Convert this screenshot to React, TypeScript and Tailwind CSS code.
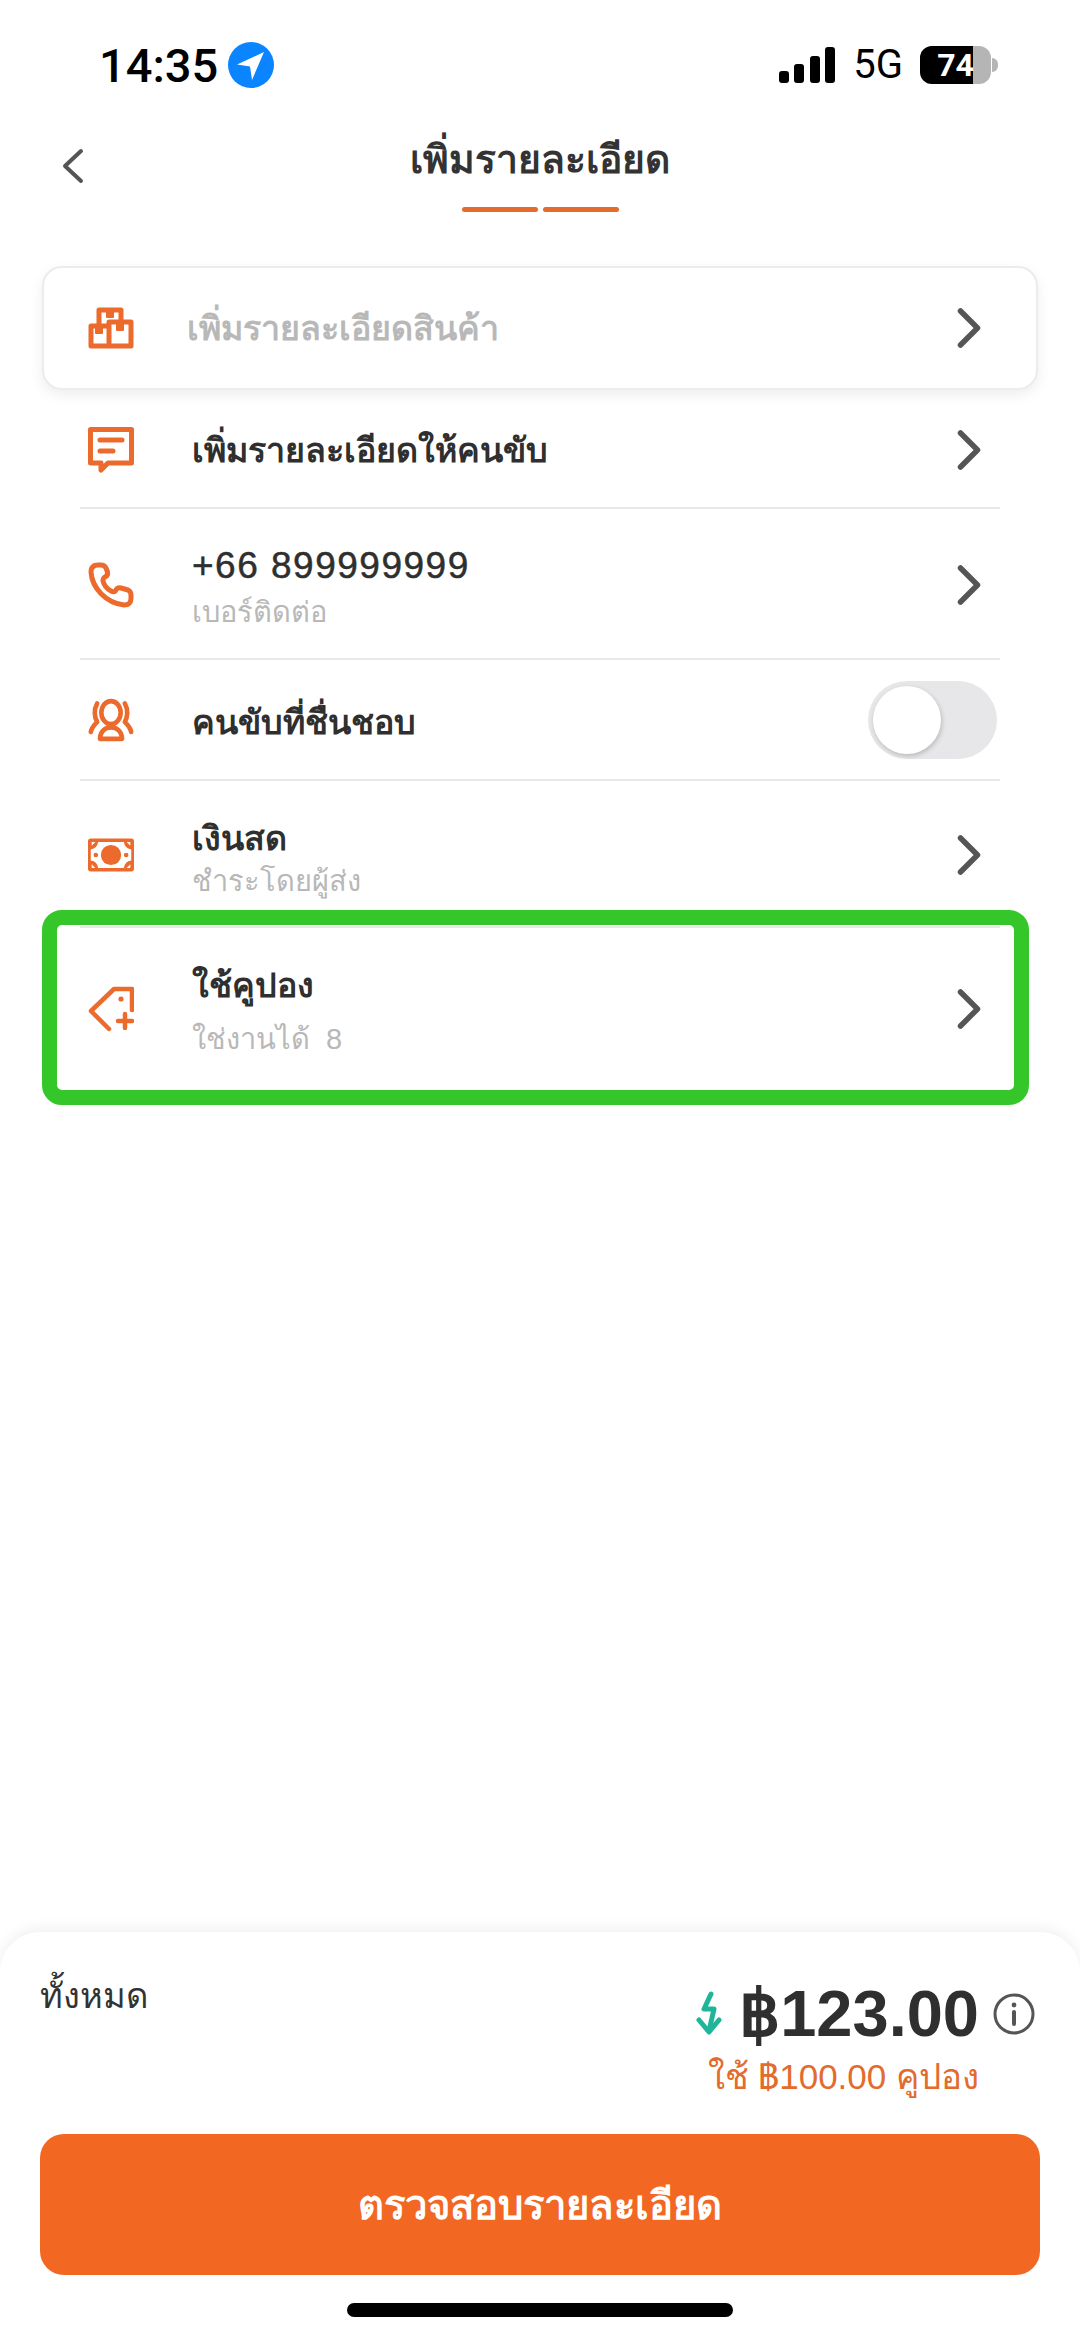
const O = "#ec6a2c";

function Chevron() {
  return (
    <svg width="24" height="40" viewBox="0 0 24 40" fill="none" className="shrink-0">
      <path d="M3.5 3 L20.5 20 L3.5 37" stroke="#555" strokeWidth="5.5" strokeLinecap="round" strokeLinejoin="round" />
    </svg>
  );
}

function BoxIcon() {
  return (
    <svg width="46" height="42" viewBox="0 0 46 42" fill="none" stroke={O} strokeWidth="5" strokeLinejoin="round">
      <path d="M3 19 H11 V3 H33 V15 H43 V39 H3 Z" />
      <path d="M11 19 H21 V39 M21 19 V15 H33" />
      <path d="M19 3 V10 H25 V3 Z M8 19 V26 H14 V19 Z M29 15 V23 H35 V15 Z" fill={O} stroke={O} strokeWidth="2" />
    </svg>
  );
}
function MsgIcon() {
  return (
    <svg width="46" height="46" viewBox="0 0 46 46" fill="none" stroke={O} strokeWidth="5" strokeLinejoin="round" strokeLinecap="round">
      <path d="M2.5 2.5 H43.5 V36 H20 L13 43 V36 H2.5 Z" />
      <path d="M12 13 H34 M12 24 H25" />
    </svg>
  );
}
function PhoneIcon() {
  return (
    <svg width="46" height="46" viewBox="0 0 46 46" fill="none" stroke={O} strokeWidth="5" strokeLinejoin="round">
      <path d="M10 3 C5 3 3 6 3 10 C4 26 18 41 36 43 C41 43 43 41 43 36 L43 33 C43 30 42 29 40 28 L33 26 C31 25.5 29 26 28 28 C27 30 25 30 23 29 C19 27 16 23 15 19 C15 17 15 16 17 15 C19 14 20 12 19.5 10 L18 6 C17 4 15 3 13 3 Z" />
    </svg>
  );
}
function DriverIcon() {
  return (
    <svg width="50" height="46" viewBox="0 0 50 46" fill="none" stroke={O} strokeWidth="5" strokeLinejoin="round" strokeLinecap="round">
      <ellipse cx="25" cy="15" rx="10.5" ry="12.5" />
      <path d="M13 43.5 C13 36 18 31 25 31 C32 31 37 36 37 43.5 Z" />
      <path d="M10 5 C6 12 7 20 10 25 C7 28 4 31 3 36 M40 5 C44 12 43 20 40 25 C43 28 46 31 47 36" />
    </svg>
  );
}
function CashIcon() {
  return (
    <svg width="50" height="36" viewBox="0 0 50 36">
      <rect width="50" height="36" rx="3" fill={O} />
      <path d="M11 4 H39 Q40 11 47 12 V24 Q40 25 39 32 H11 Q10 25 3 24 V12 Q10 11 11 4 Z" fill="#fff" />
      <circle cx="25" cy="18" r="11" fill={O} />
      <circle cx="8.5" cy="18" r="2.5" fill={O} />
      <circle cx="41.5" cy="18" r="2.5" fill={O} />
      <path d="M4 4 H8 L4 8 Z M46 4 H42 L46 8 Z M4 32 H8 L4 28 Z M46 32 H42 L46 28 Z" fill="#fff" />
    </svg>
  );
}
function TagIcon() {
  return (
    <svg width="46" height="46" viewBox="0 0 46 46" fill="none" stroke={O} strokeWidth="4.5" strokeLinecap="round" strokeLinejoin="round">
      <path d="M44 24 V3 H26 L3 25 L21 43" />
      <path d="M37 28 V42 M30 35 H44" />
      <circle cx="33" cy="13" r="2.6" fill={O} stroke="none" />
    </svg>
  );
}

function Row({ icon, title, sub, h, mono, border = true, subClass = "", textClass = "" }: { icon: React.ReactNode; title: string; sub?: string; h: string; mono?: boolean; border?: boolean; subClass?: string; textClass?: string }) {
  return (
    <div className={`flex items-center mx-[80px] pl-[8px] pr-[19px] pt-[3px] ${h} ${border ? "border-b-2 border-[#e8e8e8]" : ""}`}>
      <div className="w-[46px] flex justify-center shrink-0">{icon}</div>
      <div className={`ml-[58px] flex-1 flex flex-col justify-center ${textClass}`}>
        <div className={mono ? "text-[37px] leading-[42px] tracking-[1.5px] text-[#2f2f2f] [-webkit-text-stroke:0.5px_#2f2f2f]" : "text-[34px] leading-[42px] text-[#2f2f2f] font-bold"}>{title}</div>
        {sub && <div className={`text-[29px] leading-[36px] text-[#b8b8b8] ${subClass}`}>{sub}</div>}
      </div>
      <Chevron />
    </div>
  );
}

export default function App() {
  return (
    <div className="relative w-[1080px] h-[2336px] bg-white flex flex-col overflow-hidden font-['Liberation_Sans','Noto_Sans',sans-serif]">
      {/* status bar */}
      <div className="flex items-center h-[46px] mt-[42px] pl-[99px] pr-[82px]">
        <span className="text-[47px] leading-none font-medium text-black font-['Roboto']">14:35</span>
        <svg width="46" height="46" viewBox="0 0 46 46" className="ml-[10px]">
          <circle cx="23" cy="23" r="23" fill="#0a84ff" />
          <path d="M36 10 L9 22.5 L22 24.5 L24 38 Z" fill="#fff" />
        </svg>
        <div className="ml-auto flex items-center">
          <svg width="56" height="36" viewBox="0 0 56 36" fill="#000">
            <rect x="0" y="24" width="10" height="12" rx="3" />
            <rect x="15" y="17" width="10" height="19" rx="3" />
            <rect x="31" y="9" width="10" height="27" rx="3" />
            <rect x="46" y="0" width="10" height="36" rx="3" />
          </svg>
          <span className="ml-[18px] text-[40px] leading-none font-normal text-black font-['Roboto']">5G</span>
          <div className="ml-[17px] flex items-center">
            <div className="relative w-[71px] h-[38px] rounded-[12px] bg-[#b5b5b5] overflow-hidden">
              <div className="h-full w-[53px] bg-black" />
              <span className="absolute inset-0 flex items-center justify-center text-[32px] font-bold text-white leading-none font-['Roboto']">74</span>
            </div>
            <div className="w-[6px] h-[14px] rounded-r-full bg-[#b5b5b5] ml-[1px]" />
          </div>
        </div>
      </div>

      {/* header */}
      <div className="relative h-[60px] mt-[42px] flex items-center justify-center">
        <svg width="22" height="36" viewBox="0 0 22 36" fill="none" className="absolute left-[62px] top-[18px]">
          <path d="M19 3 L3 18 L19 33" stroke="#555" strokeWidth="4" strokeLinecap="round" strokeLinejoin="round" />
        </svg>
        <h1 className="text-[39px] leading-[60px] font-bold text-[#333]">เพิ่มรายละเอียด</h1>
      </div>
      <div className="flex justify-center gap-[5px] mt-[17px]">
        <div className="w-[76px] h-[5px] rounded-full bg-[#e26b2d]" />
        <div className="w-[76px] h-[5px] rounded-full bg-[#e26b2d]" />
      </div>

      {/* card */}
      <div className="flex items-center mx-[42px] mt-[54px] h-[124px] pl-[44px] pr-[55px] rounded-[20px] border-2 border-[#ececec] bg-white shadow-[0_5px_14px_rgba(0,0,0,0.07)]">
        <div className="w-[46px] flex justify-center shrink-0"><BoxIcon /></div>
        <div className="ml-[53px] flex-1 text-[34px] font-bold text-[#b8b8b8]">เพิ่มรายละเอียดสินค้า</div>
        <Chevron />
      </div>

      {/* rows */}
      <Row h="h-[119px]" icon={<MsgIcon />} title="เพิ่มรายละเอียดให้คนขับ" />
      <Row h="h-[151px]" icon={<PhoneIcon />} title="+66 899999999" sub="เบอร์ติดต่อ" mono subClass="mt-[7px]" textClass="pt-[4px]" />
      <div className="flex items-center mx-[80px] pl-[8px] pr-[3px] h-[121px] border-b-2 border-[#e8e8e8]">
        <div className="w-[46px] flex justify-center shrink-0"><DriverIcon /></div>
        <div className="ml-[58px] flex-1 pt-[6px] text-[34px] font-bold text-[#2f2f2f]">คนขับที่ชื่นชอบ</div>
        <div className="w-[129px] h-[78px] rounded-full bg-[#e7e7ea] p-[5px] flex">
          <div className="w-[68px] h-[68px] rounded-full bg-white shadow-[1px_2px_5px_rgba(0,0,0,0.2)]" />
        </div>
      </div>
      <Row h="h-[147px]" icon={<CashIcon />} title="เงินสด" sub="ชำระโดยผู้ส่ง" subClass="mt-[4px]" textClass="pt-[5px]" />
      <Row h="h-[158px]" icon={<TagIcon />} title="ใช้คูปอง" sub={"ใช่งานได้\u00A0\u00A08"} border={false} subClass="mt-[15px]" textClass="pt-[3px]" />

      {/* annotation */}
      <div className="absolute left-[42px] top-[910px] w-[987px] h-[195px] rounded-[20px] border-[15px] border-[#35c72a]" />

      {/* bottom sheet */}
      <div className="mt-auto h-[404px] rounded-t-[40px] bg-white shadow-[0_-4px_14px_rgba(0,0,0,0.06)] px-[40px] flex flex-col">
        <div className="flex justify-between pt-[40px]">
          <span className="text-[34.5px] leading-[48px] text-[#333]">ทั้งหมด</span>
          <div className="flex flex-col items-end mr-[5px] pt-[12px]">
            <div className="flex items-center">
              <svg width="28" height="46" viewBox="0 0 28 46" fill="none" stroke="#1fb59a" strokeWidth="5" strokeLinecap="round" strokeLinejoin="round">
                <path d="M16 3 L9 18 H19 L14 40" />
                <path d="M4 29 L14 41 L24 29" />
              </svg>
              <span className="ml-[16px] text-[65px] leading-[60px] font-bold text-[#2f2f2f]">฿123.00</span>
              <svg width="42" height="42" viewBox="0 0 42 42" fill="none" stroke="#555" strokeWidth="3" strokeLinecap="round" className="ml-[14px]">
                <circle cx="21" cy="21" r="19" />
                <path d="M21 19 V31" strokeWidth="4" />
                <circle cx="21" cy="12" r="2.4" fill="#555" stroke="none" />
              </svg>
            </div>
            <div className="mr-[56px] mt-[9px] text-[35px] leading-[48px] text-[#e26b2d]">ใช้ ฿100.00 คูปอง</div>
          </div>
        </div>
        <div className="mt-auto h-[141px] rounded-[24px] bg-[#f26722] flex items-center justify-center text-[40px] font-bold text-white">
          ตรวจสอบรายละเอียด
        </div>
        <div className="mx-auto mt-[28px] mb-[19px] w-[386px] h-[14px] rounded-full bg-black" />
      </div>
    </div>
  );
}
